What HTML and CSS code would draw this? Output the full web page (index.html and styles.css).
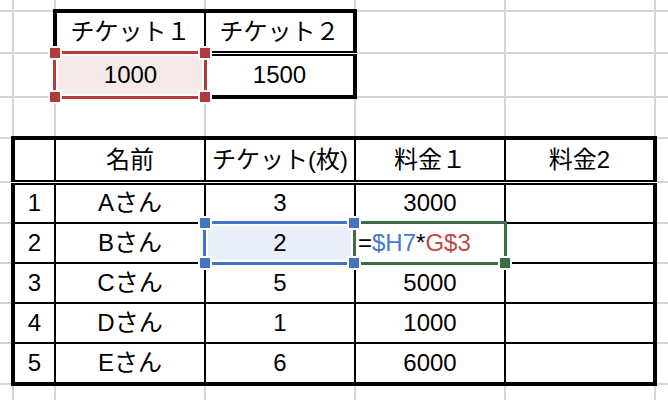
FILE: index.html
```html
<!DOCTYPE html>
<html lang="ja">
<head>
<meta charset="utf-8">
<title>Sheet</title>
<link rel="stylesheet" href="styles.css">
</head>
<body>
<div class="sheet">
  <table class="grid">
    <colgroup>
      <col class="w0"><col class="w1"><col class="w2"><col class="w2"><col class="w2"><col class="w2"><col class="w2">
    </colgroup>
    <tr class="r0"><td class="c0"></td><td></td><td></td><td></td><td></td><td></td><td></td></tr>
    <tr class="r1"><td class="c0"></td><td></td><td class="t tt tl dbl">チケット１</td><td class="t tt tr dbl">チケット２</td><td></td><td></td><td></td></tr>
    <tr class="r2"><td class="c0"></td><td></td><td class="t tb tl bg-red">1000</td><td class="t tb tr">1500</td><td></td><td></td><td></td></tr>
    <tr class="r3"><td class="c0"></td><td></td><td></td><td></td><td></td><td></td><td></td></tr>
    <tr class="r4"><td class="c0"></td><td class="t tt tl dbl"></td><td class="t tt dbl">名前</td><td class="t tt dbl">チケット(枚)</td><td class="t tt dbl">料金１</td><td class="t tt tr dbl">料金2</td><td></td></tr>
    <tr class="r5"><td class="c0"></td><td class="t tl">1</td><td class="t">Aさん</td><td class="t">3</td><td class="t">3000</td><td class="t tr"></td><td></td></tr>
    <tr class="r6"><td class="c0"></td><td class="t tl">2</td><td class="t">Bさん</td><td class="t bg-blue">2</td><td class="t formula">=<span class="ref-blue">$H7</span>*<span class="ref-red">G$3</span></td><td class="t tr"></td><td></td></tr>
    <tr class="r7"><td class="c0"></td><td class="t tl">3</td><td class="t">Cさん</td><td class="t">5</td><td class="t">5000</td><td class="t tr"></td><td></td></tr>
    <tr class="r8"><td class="c0"></td><td class="t tl">4</td><td class="t">Dさん</td><td class="t">1</td><td class="t">1000</td><td class="t tr"></td><td></td></tr>
    <tr class="r9"><td class="c0"></td><td class="t tl tb">5</td><td class="t tb">Eさん</td><td class="t tb">6</td><td class="t tb">6000</td><td class="t tr tb"></td><td></td></tr>
    <tr class="r10"><td class="c0"></td><td></td><td></td><td></td><td></td><td></td><td></td></tr>
  </table>

  <div class="sel sel-red">
    <span class="h h-tl"></span><span class="h h-tr"></span><span class="h h-bl"></span><span class="h h-br"></span>
  </div>
  <div class="sel sel-blue">
    <span class="h h-tl"></span><span class="h h-tr"></span><span class="h h-bl"></span><span class="h h-br"></span>
  </div>
  <div class="sel sel-green">
    <span class="h h-br"></span>
  </div>
</div>
</body>
</html>
```

FILE: styles.css
```css
html, body {
  margin: 0;
  padding: 0;
  overflow: hidden;
  background: #fff;
}

.sheet {
  position: relative;
  width: 668px;
  height: 400px;
  overflow: hidden;
  font-family: "Liberation Sans", "Noto Sans CJK JP", sans-serif;
  font-size: 24px;
  color: #000;
}

.grid {
  border-collapse: collapse;
  table-layout: fixed;
  width: 805px;
}

.grid col.w0 { width: 13px; }
.grid col.w1 { width: 42px; }
.grid col.w2 { width: 150px; }

.grid td {
  border: 2px solid #d6d6d6;
  padding: 0;
  text-align: center;
  vertical-align: middle;
  line-height: 28px;
  white-space: nowrap;
}

.grid td.c0 { border-left: none; }
.grid .r0 td { border-top: none; }

.r0 { height: 11px; }
.r1 { height: 42px; }
.r2 { height: 44px; }
.r3 { height: 41px; }
.r4 { height: 44px; }
.r5 { height: 41px; }
.r6, .r7, .r8 { height: 40px; }
.r9 { height: 41px; }
.r10 { height: 40px; }

.grid td.t { border-color: #000; }
.grid td.tt { border-top: 4px solid #000; }
.grid td.tb { border-bottom: 4px solid #000; }
.grid td.tl { border-left: 4px solid #000; }
.grid td.tr { border-right: 4px solid #000; }
.grid td.dbl { border-bottom: 5px double #000; }

.grid td.bg-red { background: #f6e9e9; }
.grid td.bg-blue { background: #e9eef8; }

.grid td.formula {
  text-align: left;
  padding-left: 2px;
}

.ref-blue { color: #4a78c9; }
.ref-red { color: #c24a45; }

.sel {
  position: absolute;
}

.sel-red {
  left: 53px;
  top: 51px;
  width: 154px;
  height: 48px;
  box-shadow: inset 0 0 0 3px #b13b3b, inset 0 0 0 5px #fff;
}

.sel-blue {
  left: 203px;
  top: 221px;
  width: 153px;
  height: 44px;
  box-shadow: inset 0 0 0 3px #4472c4, inset 0 0 0 5px #fff;
}

.sel-green {
  left: 353px;
  top: 221px;
  width: 154px;
  height: 44px;
  box-shadow: inset 0 0 0 3px #3b6e47;
}

.h {
  position: absolute;
  width: 10px;
  height: 10px;
  z-index: 2;
  box-shadow: 0 0 0 2px #fff;
}

.h-tl { left: -3px; top: -3px; }
.h-tr { right: -3px; top: -3px; }
.h-bl { left: -3px; bottom: -3px; }
.h-br { right: -3px; bottom: -3px; }

.sel-red .h { background: #b13b3b; }
.sel-blue .h { background: #4472c4; }
.sel-green .h { background: #3b6e47; }
```
